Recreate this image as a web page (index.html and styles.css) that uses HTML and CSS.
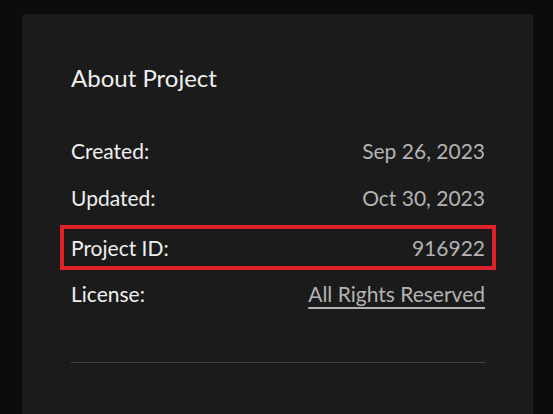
FILE: index.html
```html
<!DOCTYPE html>
<html>
<head>
<meta charset="utf-8">
<link rel="stylesheet" href="styles.css">
</head>
<body>
<div class="page">
  <section class="card">
    <h2 class="title">About Project</h2>
    <dl class="rows">
      <div class="row"><dt>Created:</dt><dd>Sep 26, 2023</dd></div>
      <div class="row"><dt>Updated:</dt><dd>Oct 30, 2023</dd></div>
      <div class="row highlight"><dt>Project ID:</dt><dd>916922</dd></div>
      <div class="row last"><dt>License:</dt><dd><a class="link" href="#">All Rights Reserved</a></dd></div>
    </dl>
    <hr class="divider">
  </section>
</div>
</body>
</html>
```
FILE: styles.css
```css
html, body {
  margin: 0;
  padding: 0;
  background: #0c0c0c;
  height: 100%;
}
.page {
  padding: 14px 20px 0 22px;
  height: 100%;
  box-sizing: border-box;
}
.card {
  background: #1b1b1b;
  border-radius: 3px 3px 0 0;
  width: 511px;
  height: 100%;
  box-sizing: border-box;
  padding: 50px 48px 0 49px;
  font-family: Lato, "Noto Sans", sans-serif;
}
.title {
  margin: 0;
  font-size: 24px;
  font-weight: 400;
  color: #efefef;
  line-height: 28px;
}
.rows {
  margin: 35px 0 0;
  padding: 0;
}
.row {
  display: flex;
  justify-content: space-between;
  align-items: center;
  height: 47px;
  font-size: 21px;
}
.row dt {
  color: #efefef;
  margin: 0;
}
.row dd {
  margin: 0;
  color: #b3b3b3;
}
.highlight {
  margin: 4px -11px 0;
  padding: 0 7px 0 7px;
  border: 4px solid #e0202a;
  height: 45px;
  box-sizing: border-box;
}
.last {
  height: 47px;
}
.link {
  color: #b3b3b3;
  text-decoration: underline;
  text-underline-offset: 5px;
  text-decoration-thickness: 2px;
}
.divider {
  margin: 45px 0 0;
  border: 0;
  border-top: 1px solid #444;
}
```
